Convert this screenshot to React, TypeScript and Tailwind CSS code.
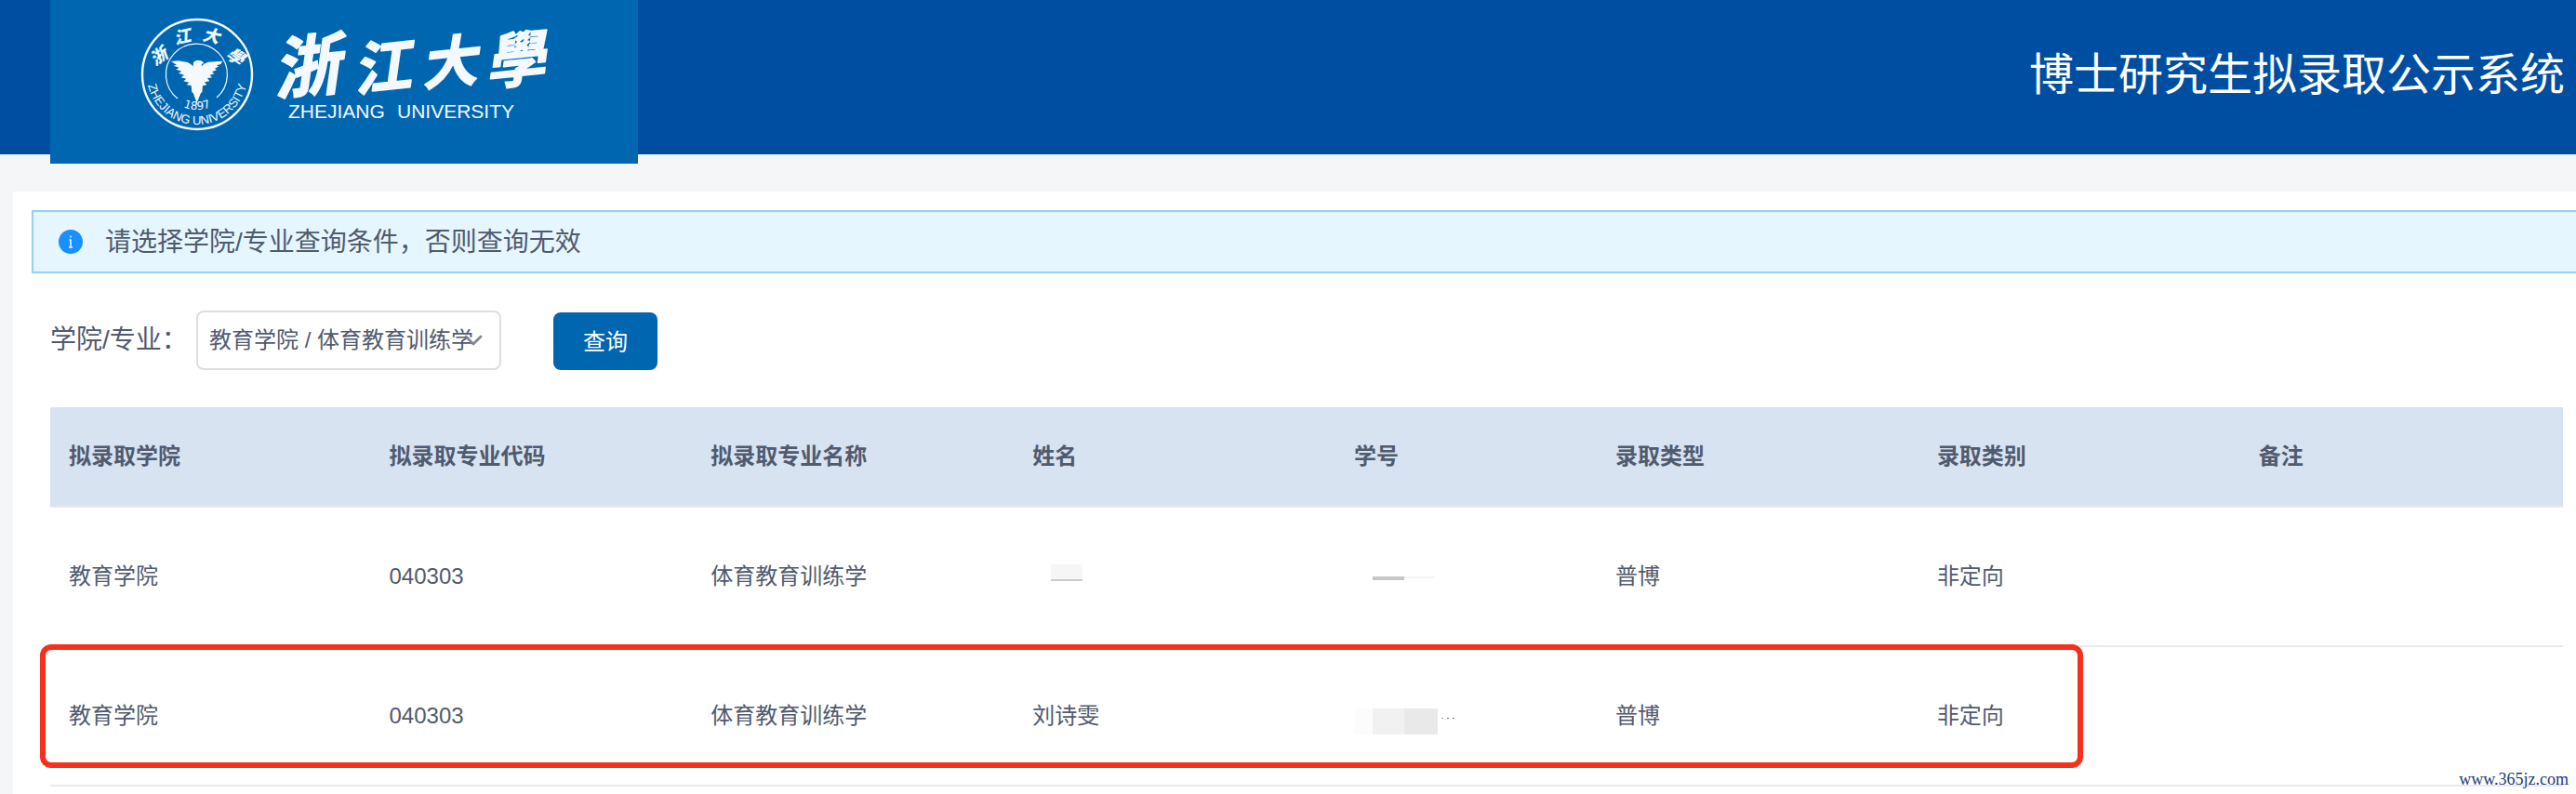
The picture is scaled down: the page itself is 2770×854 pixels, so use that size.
import { ChevronDown } from "lucide-react";

const columns = [
  { title: "拟录取学院", width: "w-[12.75%]" },
  { title: "拟录取专业代码", width: "w-[12.8%]" },
  { title: "拟录取专业名称", width: "w-[12.8%]" },
  { title: "姓名", width: "w-[12.8%]" },
  { title: "学号", width: "w-[10.4%]" },
  { title: "录取类型", width: "w-[12.8%]" },
  { title: "录取类别", width: "w-[12.8%]" },
  { title: "备注", width: "w-[12.85%]" },
];

function Logo() {
  return (
    <svg
      viewBox="0 0 632 176"
      className="block h-[176px] w-[632px] bg-[#0066b0]"
      fill="#f3f9ff"
      role="img"
      aria-label="浙江大学"
    >
      <defs>
        <path id="seal-bottom" d="M104 80A54 54 0 0 0 212 80" />
        <path id="seal-year" d="M120 80A38 38 0 0 0 196 80" />
      </defs>

      {/* seal */}
      <circle cx="158" cy="80" r="59" fill="none" stroke="#f3f9ff" strokeWidth="2.4" />
      <path d="M137 106A33 33 0 1 1 179 105" fill="none" stroke="#f3f9ff" strokeWidth="1.2" />
      <g transform="translate(76 10) scale(0.3333)">
        <path d="M162 168L185 166L215 171Q228 177 233 184L234 172Q238 164 248 164Q262 164 268 174L261 176L260 184Q268 173 282 170L328 167L322 177L308 181L316 184L303 191L309 196L294 202L301 208L287 212L294 220L279 223L286 232L270 235L277 244L264 247L262 268L258 270L245 302L233 270L229 268L227 246L212 244L220 236L202 232L211 224L194 220L204 212L186 206L196 200L178 194L188 188L170 182L180 179Z" />
      </g>
      <g
        fontFamily="'Noto Sans CJK SC', sans-serif"
        fontWeight="900"
        fontStyle="italic"
        fontSize="18"
        textAnchor="middle"
      >
        <text transform="translate(117 61) rotate(-35)" y="6">浙</text>
        <text transform="translate(142 40) rotate(-12)" y="6">江</text>
        <text transform="translate(173 39) rotate(12)" y="6">大</text>
        <text transform="translate(199 61) rotate(35)" y="6">學</text>
      </g>
      <text fontFamily="'Liberation Sans', sans-serif" fontSize="13" textAnchor="middle">
        <textPath href="#seal-bottom" startOffset="50%">ZHEJIANG UNIVERSITY</textPath>
      </text>
      <text fontFamily="'DejaVu Sans', sans-serif" fontSize="12" textAnchor="middle">
        <textPath href="#seal-year" startOffset="50%">1897</textPath>
      </text>

      {/* school name */}
      <g
        fontFamily="'Noto Sans CJK SC', sans-serif"
        fontWeight="700"
        fontStyle="italic"
        textAnchor="middle"
        stroke="#f3f9ff"
        strokeWidth="1.6"
        strokeLinejoin="round"
      >
        <text transform="translate(275 72) rotate(-6)" y="26" fontSize="72">浙</text>
        <text transform="translate(356 72) rotate(-6)" y="23" fontSize="62">江</text>
        <text transform="translate(428 67) rotate(-6)" y="22" fontSize="60">大</text>
        <text transform="translate(499 64) rotate(-6)" y="24" fontSize="64">學</text>
      </g>
      <g fontFamily="'Liberation Sans', sans-serif" fontSize="21">
        <text x="256" y="127">ZHEJIANG</text>
        <text x="373" y="127">UNIVERSITY</text>
      </g>
    </svg>
  );
}

export default function App() {
  return (
    <div className="min-h-screen overflow-hidden bg-[#f4f6f8] font-['Liberation_Sans','Noto_Sans_CJK_SC',sans-serif] text-2xl text-[#515a6e]">
      {/* header */}
      <header className="relative z-10 flex h-[166px] items-start justify-between bg-[#004ea1] pr-3 pl-[54px]">
        <Logo />
        <h1 className="pt-[45px] text-5xl leading-[72px] font-normal text-white">博士研究生拟录取公示系统</h1>
      </header>

      <main className="mt-10 ml-3.5 min-h-[648px] bg-white pt-5 pl-5">
        {/* notice */}
        <div className="flex h-[68px] items-center border-y-2 border-l-2 border-[#91d2f5] bg-[#e5f6ff] pl-[27px] text-[28px]">
          <svg viewBox="0 0 26 26" className="mr-6 size-[26px]" aria-hidden="true">
            <circle cx="13" cy="13" r="13" fill="#1890ff" />
            <path d="M13 6.5v2M11.5 11H13v8M11 19h4" stroke="#e5f6ff" strokeWidth="1.6" fill="none" />
          </svg>
          <p className="pt-0.5">请选择学院/专业查询条件，否则查询无效</p>
        </div>

        {/* search form */}
        <form className="mt-10 flex h-16 items-center pl-5" onSubmit={(e) => e.preventDefault()}>
          <label htmlFor="major" className="w-[157px] text-[28px]">
            学院/专业：
          </label>
          <div className="relative">
            <select
              id="major"
              className="h-16 w-[328px] appearance-none rounded-lg border-2 border-[#dcdee2] bg-white px-3"
            >
              <option>教育学院 / 体育教育训练学</option>
            </select>
            <ChevronDown
              className="pointer-events-none absolute top-4 right-3.5 size-8 text-[#808695]"
              strokeWidth={2}
            />
          </div>
          <button type="submit" className="mt-0.5 ml-14 h-[62px] w-28 rounded-lg bg-[#0066b0] pt-0.5 text-white">
            查询
          </button>
        </form>

        {/* results */}
        <div className="relative mt-10 mr-3.5 ml-5">
          <table className="w-full table-fixed border-collapse text-left">
            <thead>
              <tr className="h-[107px] border-b-2 border-[#e8eaec] bg-[#d7e3f1]">
                {columns.map((col) => (
                  <th key={col.title} className={`px-5 font-bold ${col.width}`}>
                    {col.title}
                  </th>
                ))}
              </tr>
            </thead>
            <tbody>
              <tr className="h-[150px] border-b-2 border-[#e8eaec]">
                <td className="px-5">教育学院</td>
                <td className="px-5">040303</td>
                <td className="px-5">体育教育训练学</td>
                <td className="px-5">
                  <div className="mb-2 ml-5 h-[18px] w-[34px] border-b-2 border-[#c8cacb] bg-[#f6f6f6]" />
                </td>
                <td className="px-5">
                  <div className="mt-1 ml-5 flex items-start">
                    <div className="h-1 w-[34px] bg-[#c5c7c8]" />
                    <div className="h-0.5 w-8 bg-[#f3f4f4]" />
                  </div>
                </td>
                <td className="px-5">普博</td>
                <td className="px-5">非定向</td>
                <td className="px-5" />
              </tr>
              <tr className="h-[150px] border-b-2 border-[#e8eaec]">
                <td className="px-5">教育学院</td>
                <td className="px-5">040303</td>
                <td className="px-5">体育教育训练学</td>
                <td className="px-5">刘诗雯</td>
                <td className="px-5">
                  <div className="mt-3 flex h-7 items-start">
                    <div className="h-7 w-5 bg-[#fcfcfc]" />
                    <div className="h-7 w-[34px] bg-[#f1f1f1]" />
                    <div className="h-7 w-9 bg-[#e9e9e9]" />
                    <div className="mt-2.5 ml-1 flex gap-1">
                      <div className="h-px w-0.5 bg-[#9a9da1]" />
                      <div className="h-px w-0.5 bg-[#6f7276]" />
                      <div className="h-px w-0.5 bg-[#6f7276]" />
                    </div>
                  </div>
                </td>
                <td className="px-5">普博</td>
                <td className="px-5">非定向</td>
                <td className="px-5" />
              </tr>
            </tbody>
          </table>
          {/* highlighted row */}
          <div className="pointer-events-none absolute bottom-5 -left-[11px] h-[133px] w-[81.3%] rounded-xl border-6 border-[#f5301c]" />
        </div>
      </main>

      <span className="absolute right-2 bottom-0 z-10 font-['Liberation_Serif',serif] text-lg leading-8 text-[#1c3a75]">
        www.365jz.com
      </span>
    </div>
  );
}
